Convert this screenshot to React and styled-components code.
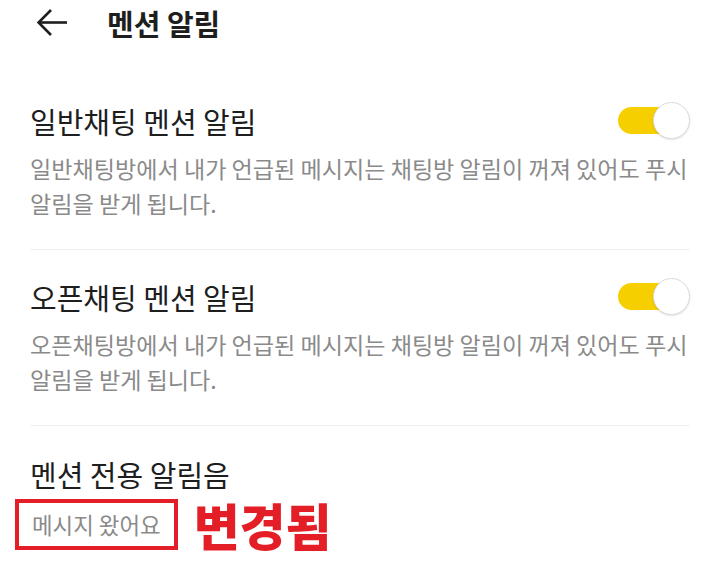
import React from "react";
import styled, { createGlobalStyle } from "styled-components";

const Global = createGlobalStyle`
  html, body { margin: 0; padding: 0; background: #fff; }
  body { font-family: "Noto Sans CJK KR", "Noto Sans", sans-serif; color: #1e1e1e; }
  * { box-sizing: border-box; }
`;

const Page = styled.div`
  width: 720px;
  height: 561px;
  overflow: hidden;
  background: #fff;
`;

const Header = styled.header`
  height: 45px;
  display: flex;
  align-items: center;
  gap: 39px;
  padding-left: 37px;
`;

const BackIcon = styled.svg`
  width: 31px;
  height: 27px;
  display: block;
`;

const HeaderTitle = styled.h1`
  margin: 0;
  font-size: 29px;
  font-weight: 700;
  line-height: 36px;
  color: #1e1e1e;
`;

const List = styled.div`
  margin-top: 29px;
`;

const Section = styled.section`
  margin: 0 30px;
  padding: ${(p) => (p.$last ? 30 : 28)}px 0 ${(p) => (p.$last ? 0 : 28)}px;
  border-bottom: ${(p) => (p.$last ? "none" : "1px solid #efefef")};
`;

const Row = styled.div`
  display: flex;
  align-items: center;
  justify-content: space-between;
`;

const Title = styled.div`
  font-size: 29px;
  line-height: 36px;
  font-weight: 400;
  color: #1e1e1e;
`;

const Desc = styled.p`
  margin: 12px 0 0;
  font-size: 23.1px;
  line-height: 35px;
  word-break: keep-all;
  color: #8a8a8a;
`;

const Toggle = styled.div`
  position: relative;
  width: 72px;
  height: 37px;
  flex: none;
`;

const Track = styled.div`
  position: absolute;
  left: 0;
  top: 5px;
  width: 57px;
  height: 27px;
  border-radius: 14px;
  background: #f6cf00;
`;

const Knob = styled.div`
  position: absolute;
  right: 0;
  top: 0;
  width: 37px;
  height: 37px;
  border-radius: 50%;
  background: #fff;
  border: 1px solid #dcdcdc;
  box-shadow: 0 1px 2px rgba(0, 0, 0, 0.12);
`;

const SoundRow = styled.div`
  display: flex;
  align-items: center;
  gap: 16px;
  margin: 6px 0 0 -15px;
`;

const Boxed = styled.div`
  border: 4px solid #e31e26;
  padding: 8px 13px;
  font-size: 22.4px;
  line-height: 27px;
  white-space: nowrap;
  color: #8a8a8a;
`;

const Changed = styled.span`
  font-size: 50px;
  line-height: 52px;
  font-weight: 900;
  color: #e31e26;
`;

const Switch = () => (
  <Toggle>
    <Track />
    <Knob />
  </Toggle>
);

const items = [
  {
    title: "일반채팅 멘션 알림",
    desc: "일반채팅방에서 내가 언급된 메시지는 채팅방 알림이 꺼져 있어도 푸시 알림을 받게 됩니다.",
  },
  {
    title: "오픈채팅 멘션 알림",
    desc: "오픈채팅방에서 내가 언급된 메시지는 채팅방 알림이 꺼져 있어도 푸시 알림을 받게 됩니다.",
  },
];

export default function App() {
  return (
    <Page>
      <Global />
      <Header>
        <BackIcon viewBox="0 0 31 27" fill="none" stroke="#1e1e1e" strokeWidth="2.6" strokeLinecap="butt">
          <path d="M1.5 13.5H30" />
          <path d="M14 1L1.5 13.5L14 26" strokeLinejoin="miter" />
        </BackIcon>
        <HeaderTitle>멘션 알림</HeaderTitle>
      </Header>
      <List>
        {items.map((it) => (
          <Section key={it.title}>
            <Row>
              <Title>{it.title}</Title>
              <Switch />
            </Row>
            <Desc>{it.desc}</Desc>
          </Section>
        ))}
        <Section $last>
          <Title>멘션 전용 알림음</Title>
          <SoundRow>
            <Boxed>메시지 왔어요</Boxed>
            <Changed>변경됨</Changed>
          </SoundRow>
        </Section>
      </List>
    </Page>
  );
}
